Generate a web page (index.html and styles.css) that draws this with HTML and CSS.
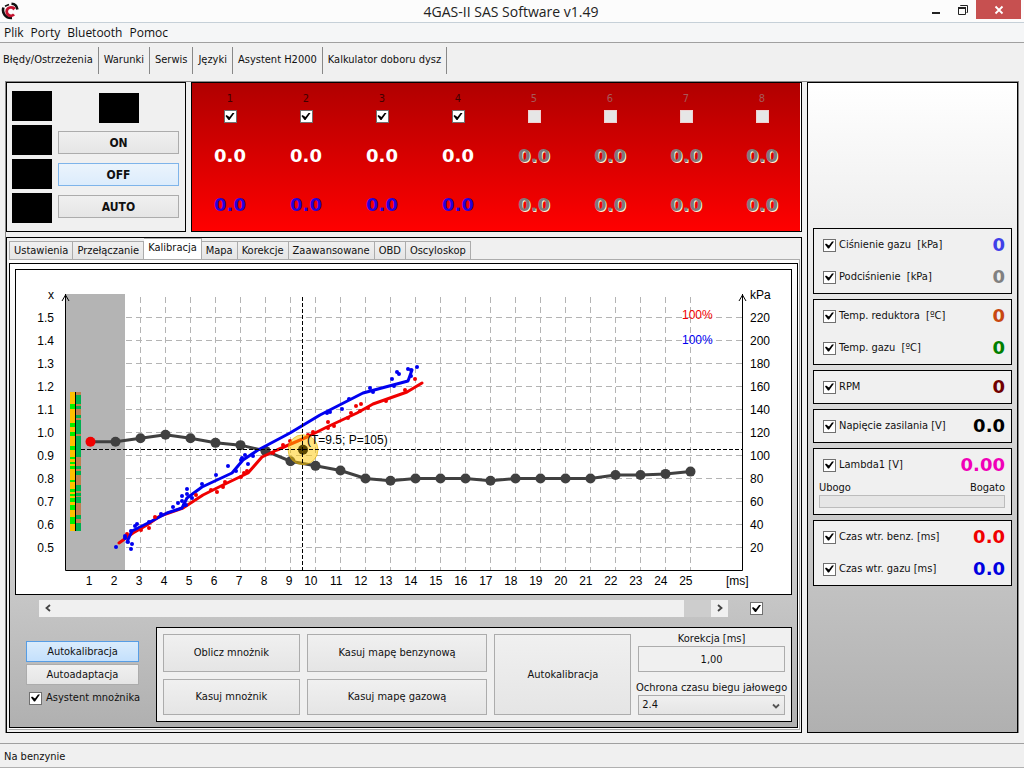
FILE: index.html
```html
<!DOCTYPE html>
<html lang="pl">

<head>
    <meta charset="UTF-8">
    <meta name="viewport" content="width=device-width, initial-scale=1.0">
    <title>4GAS-II SAS Software v1.49</title>
    <link rel="stylesheet" href="styles.css">
</head>

<body>
    <header class="titlebar">
        <svg class="logo" viewBox="0 0 18 18" width="18" height="18" aria-hidden="true">
            <path d="M10.5 1.8 C14 2 16 4 16.4 7.5" fill="none" stroke="#111" stroke-width="2.6" />
            <path d="M8 2.4 L4 4.2" fill="none" stroke="#111" stroke-width="1.6" />
            <path d="M2.4 5.5 C0.8 11 4.5 16.5 11 16" fill="none" stroke="#111" stroke-width="2.6" />
            <path d="M13 6.8 A4.2 4.2 0 1 0 13 12.4" fill="none" stroke="#c4122f" stroke-width="2.8" />
            <path d="M11.5 4 L15 6 L12 8.5 Z" fill="#c4122f" />
        </svg>
        <h1>4GAS-II SAS Software v1.49</h1>
        <div class="window-buttons">
            <button type="button" aria-label="Minimalizuj">
                <svg viewBox="0 0 12 12" width="12" height="12"><path d="M1 9 H9" stroke="#222" stroke-width="2" /></svg>
            </button>
            <button type="button" aria-label="Przywróć">
                <svg viewBox="0 0 12 12" width="12" height="12" fill="none" stroke="#222"><path d="M3.5 2 V1.5 H10.5 V8.5 H9.5" /><path d="M1.5 4 H8.5 V10.5 H1.5 Z" /><path d="M1 4 H9" stroke-width="2" /></svg>
            </button>
            <button type="button" class="close" aria-label="Zamknij">
                <svg viewBox="0 0 10 10" width="10" height="10"><path d="M1.5 1.5 L8.5 8.5 M8.5 1.5 L1.5 8.5" stroke="#fff" stroke-width="1.8" /></svg>
            </button>
        </div>
    </header>

    <nav class="menubar">
        <a href="#">Plik</a>
        <a href="#">Porty</a>
        <a href="#">Bluetooth</a>
        <a href="#">Pomoc</a>
    </nav>

    <nav class="toolbar">
        <button type="button">Błędy/Ostrzeżenia</button>
        <button type="button">Warunki</button>
        <button type="button">Serwis</button>
        <button type="button">Języki</button>
        <button type="button">Asystent H2000</button>
        <button type="button">Kalkulator doboru dysz</button>
    </nav>

    <main class="workspace">
        <div class="left-column">
            <div class="top-row">
                <section class="panel mode-panel">
                    <div class="leds">
                        <span></span>
                        <span></span>
                        <span></span>
                        <span></span>
                    </div>
                    <div class="mode-buttons">
                        <span class="led"></span>
                        <button type="button" class="btn">ON</button>
                        <button type="button" class="btn selected">OFF</button>
                        <button type="button" class="btn">AUTO</button>
                    </div>
                </section>

                <section class="panel injectors" id="injectors"></section>
            </div>

            <section class="panel tabs-panel">
                <div class="tabs" role="tablist">
                    <button type="button" role="tab">Ustawienia</button>
                    <button type="button" role="tab">Przełączanie</button>
                    <button type="button" role="tab" class="active" aria-selected="true">Kalibracja</button>
                    <button type="button" role="tab">Mapa</button>
                    <button type="button" role="tab">Korekcje</button>
                    <button type="button" role="tab">Zaawansowane</button>
                    <button type="button" role="tab">OBD</button>
                    <button type="button" role="tab">Oscyloskop</button>
                </div>
                <div class="tab-frame">
                    <div class="tab-body">
                        <div class="chart">
                            <svg id="chart" viewBox="0 0 775 324"></svg>
                        </div>

                        <div class="scroll-row">
                            <div class="scrollbar">
                                <button type="button" aria-label="W lewo">
                                    <svg viewBox="0 0 8 8" width="8" height="8"><path d="M6 1 L2.5 4 L6 7" fill="none" stroke="#444" stroke-width="1.8" /></svg>
                                </button>
                                <div class="track"><div class="thumb"></div></div>
                                <button type="button" aria-label="W prawo">
                                    <svg viewBox="0 0 8 8" width="8" height="8"><path d="M2 1 L5.5 4 L2 7" fill="none" stroke="#444" stroke-width="1.8" /></svg>
                                </button>
                            </div>
                            <input type="checkbox" aria-label="Przewijanie" checked>
                        </div>

                        <div class="controls">
                            <div class="auto-mode">
                                <button type="button" class="btn pressed">Autokalibracja</button>
                                <button type="button" class="btn">Autoadaptacja</button>
                                <label><input type="checkbox" checked>Asystent mnożnika</label>
                            </div>
                            <div class="panel actions">
                                <button type="button" class="btn">Oblicz mnożnik</button>
                                <button type="button" class="btn">Kasuj mapę benzynową</button>
                                <button type="button" class="btn tall">Autokalibracja</button>
                                <div class="fields tall">
                                    <label for="correction">Korekcja [ms]</label>
                                    <input type="text" id="correction" value="1,00">
                                    <label for="idleGuard">Ochrona czasu biegu jałowego</label>
                                    <div class="select">
                                        <select id="idleGuard">
                                            <option>2.4</option>
                                        </select>
                                        <svg viewBox="0 0 8 8" width="8" height="8"><path d="M1 2.5 L4 5.5 L7 2.5" fill="none" stroke="#555" stroke-width="1.8" /></svg>
                                    </div>
                                </div>
                                <button type="button" class="btn">Kasuj mnożnik</button>
                                <button type="button" class="btn">Kasuj mapę gazową</button>
                            </div>
                        </div>
                    </div>
                </div>
            </section>
        </div>

        <aside class="panel readings">
            <div class="panel group">
                <div class="reading"><label><input type="checkbox" checked>Ciśnienie gazu&nbsp; [kPa]</label><output class="violet">0</output></div>
                <div class="reading"><label><input type="checkbox" checked>Podciśnienie&nbsp; [kPa]</label><output class="gray">0</output></div>
            </div>
            <div class="panel group">
                <div class="reading"><label><input type="checkbox" checked>Temp. reduktora&nbsp; [ºC]</label><output class="orange">0</output></div>
                <div class="reading"><label><input type="checkbox" checked>Temp. gazu&nbsp; [ºC]</label><output class="green">0</output></div>
            </div>
            <div class="panel group">
                <div class="reading"><label><input type="checkbox" checked>RPM</label><output class="maroon">0</output></div>
            </div>
            <div class="panel group">
                <div class="reading"><label><input type="checkbox" checked>Napięcie zasilania [V]</label><output>0.0</output></div>
            </div>
            <div class="panel group">
                <div class="reading"><label><input type="checkbox" checked>Lambda1 [V]</label><output class="magenta">0.00</output></div>
                <div class="lambda-scale"><span>Ubogo</span><span>Bogato</span></div>
                <div class="lambda-bar"></div>
            </div>
            <div class="panel group">
                <div class="reading"><label><input type="checkbox" checked>Czas wtr. benz. [ms]</label><output class="red">0.0</output></div>
                <div class="reading"><label><input type="checkbox" checked>Czas wtr. gazu [ms]</label><output class="blue">0.0</output></div>
            </div>
        </aside>
    </main>

    <footer class="statusbar">Na benzynie</footer>

    <script src="script.js"></script>
</body>

</html>
```
FILE: styles.css
```css
* {
    margin: 0;
    padding: 0;
    box-sizing: border-box;
}

body {
    font-family: "DejaVu Sans Condensed", Roboto, sans-serif;
    font-size: 11px;
    line-height: 14px;
    color: #111;
    background-color: #f0f0f0;
    min-height: 100vh;
    display: flex;
    flex-direction: column;
}

button,
input,
select {
    font: inherit;
    color: inherit;
}

label {
    display: flex;
    align-items: center;
    white-space: nowrap;
}

/* Title bar */
.titlebar {
    display: grid;
    grid-template-columns: 1fr auto 1fr;
    align-items: center;
    height: 23px;
    padding: 0 3px 0 1px;
    background-color: #fcfcfc;
    border-bottom: 1px solid #c6d0d8;
}

.titlebar h1 {
    font: 14px "Open Sans", sans-serif;
    color: #222;
}

.window-buttons {
    display: flex;
    justify-content: flex-end;
    align-self: start;
}

.window-buttons button {
    display: flex;
    align-items: center;
    justify-content: center;
    width: 26px;
    height: 19px;
    background: none;
    border: none;
}

.window-buttons .close {
    width: 45px;
    background-color: #c75050;
}

/* Menu and toolbar */
.menubar {
    display: flex;
    align-items: center;
    gap: 7px;
    height: 20px;
    padding: 0 4px;
    font: 12px "Open Sans", sans-serif;
    background-color: #f5f6f7;
    border-bottom: 1px solid #a0a0a0;
}

.menubar a {
    color: inherit;
    text-decoration: none;
}

.toolbar {
    display: flex;
    height: 38px;
    padding: 4px 0 7px;
}

.toolbar button {
    padding: 0 5px 2px;
    background: none;
    border: none;
    border-right: 1px solid #888;
    white-space: nowrap;
}

.toolbar button:first-child {
    padding-left: 3px;
}

/* Shared parts */
.panel {
    border: 1px solid #000;
    background-color: #f0f0f0;
}

.btn {
    background: linear-gradient(#f0f0f0, #e5e5e5);
    border: 1px solid #acacac;
}

.btn.selected {
    background: linear-gradient(#ebf4fc, #dcecfc);
    border-color: #7eb4ea;
}

.btn.pressed {
    background: linear-gradient(#daecfc, #c4e0fc);
    border-color: #569de5;
}

input[type="checkbox"] {
    appearance: none;
    flex: none;
    display: block;
    width: 13px;
    height: 13px;
    background-color: #fff;
    border: 1px solid #707070;
}

input[type="checkbox"]:checked::before {
    content: "";
    display: block;
    width: 11px;
    height: 11px;
    background-color: #000;
    clip-path: polygon(1px 5px, 2px 4px, 5px 6px, 8px 2px, 10px 2px, 5px 9px, 4px 9px);
}

input[type="checkbox"]:disabled {
    background-color: #e6e6e6;
    border-color: #f0d0d0;
}

/* Workspace */
.workspace {
    flex: 1;
    display: flex;
    gap: 5px;
    margin: 0 5px 10px;
    border: solid #888;
    border-width: 1px 1px 0;
}

.left-column {
    flex: 1;
    min-width: 0;
    display: flex;
    flex-direction: column;
    gap: 5px;
}

.top-row {
    display: flex;
    gap: 5px;
    height: 150px;
}

.mode-panel {
    display: flex;
    gap: 6px;
    width: 180px;
    padding: 8px 6px 0 5px;
}

.leds {
    display: flex;
    flex-direction: column;
    gap: 4px;
}

.leds span,
.led {
    width: 40px;
    height: 30px;
    background-color: #000;
}

.mode-buttons {
    flex: 1;
    display: flex;
    flex-direction: column;
    gap: 9px;
    padding-top: 2px;
}

.mode-buttons .led {
    align-self: center;
    margin-bottom: -1px;
}

.mode-buttons .btn {
    height: 23px;
    font-size: 12px;
    font-weight: bold;
}

.injectors {
    flex: 1;
    display: grid;
    grid-template-columns: repeat(8, 1fr);
    padding-right: 1px;
    background: linear-gradient(#b00000, #ff0000);
    box-shadow: inset -1px 0 #fff;
}

.injector {
    display: flex;
    flex-direction: column;
    align-items: center;
    padding-top: 9px;
    color: #400000;
}

.injector label {
    flex-direction: column;
    gap: 4px;
}

.injector output {
    margin-top: 21px;
    line-height: 24px;
    font-size: 18px;
    font-family: "DejaVu Sans", sans-serif;
    font-weight: bold;
    color: #fff;
}

.injector output + output {
    margin-top: 25px;
    color: #2800d8;
}

.injector.off {
    color: #a85858;
}

.injector.off output {
    color: #807878;
    text-shadow: 1px 1px #fff0d8;
}

/* Tabs */
.tabs-panel {
    flex: 1;
    display: flex;
    flex-direction: column;
    padding: 0 1px 2px 2px;
}

.tabs {
    display: flex;
    align-items: flex-end;
    height: 21px;
}

.tabs button {
    height: 18px;
    padding: 0 4px;
    background: linear-gradient(#f0f0f0, #e5e5e5);
    border: 1px solid #acacac;
    border-width: 1px 1px 0 0;
    white-space: nowrap;
}

.tabs button:first-child {
    border-left-width: 1px;
}

.tabs .active {
    height: 21px;
    padding-bottom: 3px;
    background: #fff;
}

.tab-frame {
    flex: 1;
    display: flex;
    padding: 3px 1px 1px 0;
    background-color: #fff;
    border: 1px solid #acacac;
    border-left: none;
}

.tab-body {
    flex: 1;
    min-width: 0;
    padding: 5px;
    background: linear-gradient(#fff, #b0b0b0);
    border: 1px solid #000;
}

.chart {
    background-color: #fff;
    border: 1px solid #000;
}

.chart svg {
    display: block;
    width: 100%;
    font: 12px "Liberation Sans", Arial, sans-serif;
}

.scroll-row {
    display: flex;
    align-items: center;
    gap: 22px;
    padding: 5px 29px 10px 24px;
}

.scrollbar {
    flex: 1;
    display: flex;
    height: 17px;
    background-color: #f0f0f0;
}

.scrollbar button {
    width: 17px;
    background: none;
    border: none;
}

.track {
    flex: 1;
    display: flex;
    justify-content: flex-end;
}

.thumb {
    width: 27px;
    background-color: #cdcdcd;
}

.controls {
    display: flex;
    gap: 17px;
}

.auto-mode {
    display: flex;
    flex-direction: column;
    gap: 2px;
    width: 113px;
    margin-left: 11px;
    padding-top: 14px;
}

.auto-mode .btn {
    height: 21px;
}

.auto-mode label {
    gap: 4px;
    padding: 4px 0 0 3px;
}

.actions {
    flex: 1;
    display: grid;
    grid-template-columns: 137fr 181fr 137fr 147fr;
    grid-template-rows: 38px 36px;
    gap: 7px;
    padding: 6px;
}

.tall {
    grid-row: span 2;
}

.fields {
    min-width: 0;
    display: flex;
    flex-direction: column;
    margin-top: -2px;
}

.fields label {
    justify-content: center;
}

.fields input {
    width: 100%;
    height: 27px;
    margin-bottom: 9px;
    text-align: center;
    background-color: #f0f0f0;
    border: 1px solid #acacac;
}

.select {
    position: relative;
}

.select select {
    appearance: none;
    display: block;
    width: 100%;
    height: 20px;
    padding: 0 3px;
    background: linear-gradient(#f0f0f0, #e5e5e5);
    border: 1px solid #acacac;
}

.select svg {
    position: absolute;
    right: 5px;
    top: 7px;
    pointer-events: none;
}

/* Readings */
.readings {
    display: flex;
    flex-direction: column;
    gap: 5px;
    width: 211px;
    padding: 145px 5px 0;
    background: linear-gradient(#fff, #f0f0f0 20%, #b0b0b0);
}

.group {
    padding: 0 6px 0 5px;
}

.reading {
    display: flex;
    align-items: center;
    justify-content: space-between;
    height: 32px;
    padding-left: 4px;
}

.reading label {
    gap: 3px;
}

.reading output {
    font-family: "DejaVu Sans", sans-serif;
    font-size: 18px;
    font-weight: bold;
    color: #000;
}

.reading .violet { color: #4040e8; }
.reading .gray { color: #808080; }
.reading .orange { color: #c84810; }
.reading .green { color: #008000; }
.reading .maroon { color: #700000; }
.reading .magenta { color: #f000b8; }
.reading .red { color: #f00000; }
.reading .blue { color: #0000e0; }

.lambda-scale {
    display: flex;
    justify-content: space-between;
}

.lambda-bar {
    height: 13px;
    margin-bottom: 6px;
    background-color: #e6e6e6;
    border: 1px solid #bcbcbc;
}

.statusbar {
    height: 26px;
    padding: 6px 4px 0;
    border-top: 1px solid #a0a0a0;
    box-shadow: inset 0 -2px #b0b0b0;
}

/* Chart */
.grid line {
    stroke: #b4b4b4;
    stroke-dasharray: 6 4;
}

.axis {
    fill: none;
    stroke: #000;
}

.idle-zone {
    fill: #b4b4b4;
}

.cursor {
    stroke: #000;
    stroke-dasharray: 4 2;
}

.multiplier {
    fill: none;
    stroke: #404040;
    stroke-width: 3;
}

.petrol,
.gas {
    fill: none;
    stroke-width: 3;
    stroke-linejoin: round;
    stroke-linecap: round;
}

.petrol { stroke: #f00000; }
.gas { stroke: #0000f0; }
.petrol-dots, .petrol-text { fill: #f00000; }
.gas-dots, .gas-text { fill: #0000f0; }

.halo {
    fill: #ffc800;
    fill-opacity: 0.5;
    stroke: #e8b400;
    stroke-opacity: 0.6;
}
```
FILE: script.js
```js
// Injector columns, only the first four are in use
const injectors = document.getElementById('injectors');
for (let i = 1; i <= 8; i++) {
    const on = i <= 4;
    injectors.innerHTML += `
        <div class="injector${on ? '' : ' off'}">
            <label>${i}<input type="checkbox" ${on ? 'checked' : 'disabled'}></label>
            <output>0.0</output>
            <output>0.0</output>
        </div>`;
}

// Calibration chart
const px = ms => 49.5 + 25 * ms;
const py = kpa => 300.5 - 1.15 * kpa;
const pm = mult => 277.5 - 230 * (mult - 0.5);

const multiplier = [
    0.96, 0.96, 0.975, 0.99, 0.975, 0.955, 0.945, 0.92, 0.875, 0.855, 0.835, 0.8, 0.79,
    0.8, 0.8, 0.8, 0.79, 0.8, 0.8, 0.8, 0.8, 0.815, 0.815, 0.82, 0.83
];

const petrolLine = '103,273 117,263 131,255 144,246 167,238 187,225 207,215 232,203 246,187 261,180 291,167 311,157 341,143 357,134 391,122 406,113';
const gasLine = '111,272 116,261 134,252 151,243 166,238 171,228 186,217 216,203 227,190 242,180 274,163 304,145 347,123 392,111 396,100';

const petrolDots = [
    [111, 264], [125, 260], [133, 258], [139, 247], [180, 225], [195, 220], [201, 222], [207, 217], [209, 212],
    [225, 207], [228, 203], [231, 201], [257, 183], [267, 175], [274, 171], [292, 165], [297, 162], [312, 152],
    [312, 158], [318, 156], [332, 148], [335, 143], [340, 136], [345, 134], [344, 141], [352, 138], [370, 131],
    [389, 120], [399, 109]
];

const gasDots = [
    [100, 277], [109, 268], [112, 272], [115, 279], [116, 274], [109, 266], [115, 261], [119, 256], [121, 254],
    [133, 252], [145, 244], [157, 237], [162, 233], [166, 226], [166, 231], [168, 235], [171, 219], [171, 224],
    [176, 228], [170, 235], [186, 214], [200, 205], [212, 196], [220, 201], [225, 190], [226, 188], [229, 185],
    [232, 194], [237, 186], [311, 143], [314, 142], [326, 139], [333, 129], [354, 118], [357, 122], [376, 109],
    [378, 116], [381, 102], [383, 104], [392, 99], [395, 106], [401, 97], [395, 100]
];

// Histogram stripes, [top, height]
const leftStripes = [[12, 5], [31, 4], [40, 4], [54, 4], [65, 2], [70, 2], [74, 3], [88, 2], [97, 3], [102, 2], [106, 4], [113, 5], [125, 7]];
const rightStripes = [[0, 3], [12, 2], [17, 6], [26, 2], [42, 2], [65, 9], [77, 2], [83, 10], [99, 2], [104, 1], [111, 12], [127, 4]];

const circles = (points, r) => points.map(p => `<circle cx="${p[0]}" cy="${p[1]}" r="${r}"/>`).join('');
const stripes = (list, x) => list.map(s => `<rect x="${x}" y="${122 + s[0]}" width="5" height="${s[1]}"/>`).join('');

let grid = '';
let labels = '';

for (let ms = 1; ms <= 25; ms++) {
    grid += `<line x1="${px(ms)}" y1="27" x2="${px(ms)}" y2="300"/>`;
    labels += `<text x="${px(ms) + 2}" y="315" text-anchor="end">${ms}</text>`;
}

for (let i = 0; i <= 10; i++) {
    const kpa = 20 + i * 20;
    grid += `<line x1="50" y1="${py(kpa)}" x2="726" y2="${py(kpa)}"/>`;
    labels += `<text x="38" y="${py(kpa) + 4}" text-anchor="end">${(0.5 + i / 10).toFixed(1)}</text>`;
    labels += `<text x="734" y="${py(kpa) + 4}">${kpa}</text>`;
}

const curve = multiplier.map((m, i) => [px(i + 1), pm(m)]);
const cx = px(9.5);
const cy = py(105);

document.getElementById('chart').innerHTML = `
    <g class="grid">${grid}</g>
    <rect class="idle-zone" x="50" y="24" width="59" height="276"/>
    <polyline class="axis" points="49.5,24 49.5,300.5 726.5,300.5 726.5,24"/>
    <path class="axis" d="M46 31 L49.5 25 L53 31 M723 31 L726.5 25 L730 31"/>
    <g>
        <rect x="54" y="122" width="5" height="139" fill="#ffc000"/>
        <g fill="#00f000">${stripes(leftStripes, 54)}</g>
        <rect x="60" y="122" width="5" height="139" fill="#00b050"/>
        <g fill="#c08050">${stripes(rightStripes, 60)}</g>
        <line x1="59.5" y1="122" x2="59.5" y2="261" stroke="#000"/>
    </g>
    <polyline class="multiplier" points="${curve.join(' ')}"/>
    <g fill="#404040">${circles(curve.slice(1), 5)}</g>
    <circle cx="${curve[0][0]}" cy="${curve[0][1]}" r="5" fill="#f00000"/>
    <polyline class="petrol" points="${petrolLine}"/>
    <polyline class="gas" points="${gasLine}"/>
    <g class="petrol-dots">${circles(petrolDots, 2)}</g>
    <g class="gas-dots">${circles(gasDots, 2)}</g>
    <circle class="halo" cx="${cx}" cy="${cy}" r="15"/>
    <circle cx="${cx}" cy="${cy}" r="5" fill="#5c4800"/>
    <line class="cursor" x1="65" y1="179.5" x2="726" y2="179.5"/>
    <line class="cursor" x1="286.5" y1="27" x2="286.5" y2="300"/>
    <text x="291" y="174">(T=9.5; P=105)</text>
    ${labels}
    <text x="32" y="29">x</text>
    <text x="734" y="29">kPa</text>
    <text x="710" y="315">[ms]</text>
    <text class="petrol-text" x="666" y="49">100%</text>
    <text class="gas-text" x="666" y="74">100%</text>`;
```
